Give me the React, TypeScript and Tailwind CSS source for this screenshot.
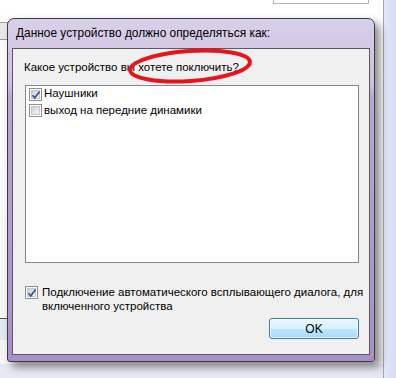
function CheckBox({ checked }: { checked?: boolean }) {
  return (
    <span className="relative flex h-[13px] w-[13px] shrink-0 items-center justify-center border border-[#8e8f8f] bg-white">
      <span className="h-[9px] w-[9px] border border-[#c6c6c6] bg-[linear-gradient(135deg,#cbcfd5,#f6f6f6)]" />
      {checked && (
        <svg className="absolute left-[1px] top-[1px]" width="10" height="10" viewBox="0 0 10 10">
          <path d="M1.5 5.2 L3.8 7.8 L8.6 1.6" fill="none" stroke="#3d4fa0" strokeWidth="1.7" />
        </svg>
      )}
    </span>
  );
}

export default function App() {
  return (
    <div className="relative h-[378px] w-[396px] overflow-hidden bg-[linear-gradient(180deg,#ffffff_0%,#f4f4f4_100%)] font-['Liberation_Sans',Arial,sans-serif] text-[11.5px] text-black">
      {/* desktop behind the dialog */}
      <div className="absolute left-[273px] top-[-2px] h-[6px] w-[96px] border border-[#b5b5b5] bg-white" />
      <div className="absolute left-[-4px] top-[22px] h-[18px] w-[12px] border border-[#9a9a9a] bg-[#e8e8e8]" />
      <div className="absolute left-0 top-[318px] h-[22px] w-[10px] border-t border-[#555] bg-[#dfe7f0]" />
      <div className="absolute right-0 top-0 h-full w-[13px] border-l border-[#a6a6a6] bg-[linear-gradient(90deg,#e4e8f8,#d4dcf4)]" />
      <div className="absolute bottom-0 left-0 h-[14px] w-[383px] bg-[#e7e9f1]" />

      {/* dialog */}
      <div className="absolute left-[7px] top-[18px] flex h-[344px] w-[368px] flex-col rounded-t-[7px] rounded-b-[3px] border border-[#3b3b3b] bg-[linear-gradient(180deg,#d9d0e9_0px,#cdbfe0_65px,#b9a5d6_80px,#a88fcb_100%)] px-[4px] pb-[6px] shadow-[5px_5px_9px_rgba(0,0,0,0.45)]">
        <div className="flex h-[29px] items-center pl-[4px] text-[11.9px] text-black">
          Данное устройство должно определяться как:
        </div>
        <div className="flex flex-1 flex-col border border-[#5a5a5a] bg-[#f0f0f0]">
          <div className="pl-[11px] pt-[11px] leading-[15px]">Какое устройство вы хотете поключить?</div>
          <div className="ml-[12px] mt-[10px] h-[178px] w-[334px] border border-[#828790] bg-white px-[3px]">
            <div className="flex h-[16px] items-center gap-[2px]">
              <CheckBox checked />
              <span>Наушники</span>
            </div>
            <div className="flex h-[17px] items-center gap-[2px]">
              <CheckBox />
              <span>выход на передние динамики</span>
            </div>
          </div>
          <div className="ml-[12px] mt-[22px] flex items-start gap-[4px]">
            <div className="pt-[1px]">
              <CheckBox checked />
            </div>
            <div className="w-[326px] leading-[14px]">
              Подключение автоматического всплывающего диалога, для включенного устройства
            </div>
          </div>
          <div className="mr-[10px] mt-[5px] flex justify-end">
            <button className="flex h-[21px] w-[90px] items-center justify-center rounded-[3px] border border-[#3c7fb1] bg-[linear-gradient(180deg,#eaf6fd_0%,#d9f0fc_50%,#bee6fd_51%,#a7d9f5_100%)] text-[12px] shadow-[inset_0_0_0_1px_rgba(255,255,255,0.7)]">
              OK
            </button>
          </div>
        </div>
      </div>

      {/* red marker ellipse */}
      <svg className="pointer-events-none absolute left-0 top-0" width="396" height="378">
        <ellipse cx="190" cy="66" rx="60" ry="15" fill="none" stroke="#e8141c" strokeWidth="4" transform="rotate(-4 190 66)" />
      </svg>
    </div>
  );
}
